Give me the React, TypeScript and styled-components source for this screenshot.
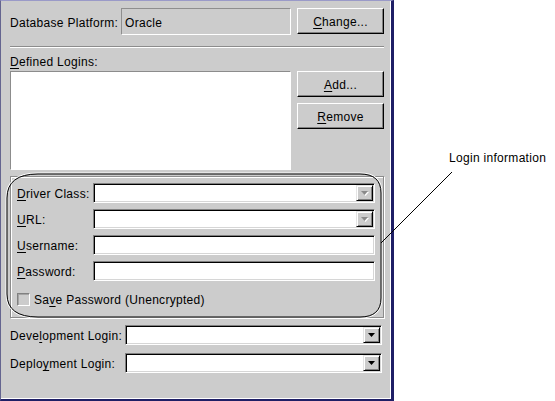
import React from 'react';
import styled, { createGlobalStyle, css } from 'styled-components';

const GlobalStyle = createGlobalStyle`
  html, body {
    margin: 0;
    padding: 0;
    background: #ffffff;
  }
  body {
    font-family: 'Liberation Sans', Arial, sans-serif;
    font-size: 12px;
    letter-spacing: 0.3px;
    color: #000000;
  }
`;

const Page = styled.div`
  position: relative;
  display: flex;
  width: 555px;
  height: 401px;
  overflow: hidden;
`;

const Frame = styled.div`
  box-sizing: border-box;
  width: 394px;
  height: 401px;
  padding: 7px 7px 0 9px;
  display: flex;
  flex-direction: column;
  background: #cccccc;
  border-left: 1px solid #64648f;
  border-top: 1px solid #9a9ac8;
  border-right: 3px solid #1f1f66;
  border-bottom: 2px solid #1f1f66;
  box-shadow: inset -1px -1px 0 #ffffff;
`;

const TopRow = styled.div`
  display: flex;
  align-items: flex-start;
  gap: 6px;
  height: 27px;
`;

const Label = styled.span<{ $w?: number }>`
  flex: none;
  width: ${(p) => (p.$w ? `${p.$w}px` : 'auto')};
  line-height: 14px;
  padding-top: 2px;
  white-space: nowrap;
`;

const TopLabel = styled(Label)`
  align-self: center;
  padding-top: 3px;
`;

const Mn = styled.span`
  text-decoration: underline;
  text-underline-offset: 2px;
`;

const ReadOnlyField = styled.div`
  box-sizing: border-box;
  width: 170px;
  height: 27px;
  padding: 3px 0 0 3px;
  display: flex;
  align-items: center;
  line-height: 14px;
  border: 1px solid;
  border-color: #8e8e8e #ffffff #ffffff #8e8e8e;
`;

const Button = styled.div`
  box-sizing: border-box;
  width: 87px;
  height: 26px;
  padding-top: 2px;
  display: flex;
  align-items: center;
  justify-content: center;
  line-height: 14px;
  background: #cccccc;
  border: 1px solid;
  border-color: #ffffff #000000 #000000 #ffffff;
  box-shadow: inset -1px -1px 0 #808080;
`;

const Separator = styled.div`
  margin-top: 11px;
  height: 0;
  border-top: 1px solid #8c8c8c;
  border-bottom: 1px solid #ffffff;
`;

const SectionLabel = styled.div`
  margin: 7px 0 2px;
  line-height: 14px;
`;

const LoginsRow = styled.div`
  display: flex;
  align-items: flex-start;
  gap: 6px;
`;

const ListBox = styled.div`
  box-sizing: border-box;
  width: 281px;
  height: 99px;
  background: #ffffff;
  border: 1px solid;
  border-color: #8c8c8c #ffffff #ffffff #8c8c8c;
`;

const ButtonStack = styled.div`
  display: flex;
  flex-direction: column;
  gap: 6px;
`;

const Group = styled.div`
  margin-top: 6px;
  padding: 6px 8px 11px 6px;
  border: 1px solid #8c8c8c;
  box-shadow: inset 1px 1px 0 #ffffff, 1px 1px 0 #ffffff;
`;

const FieldGrid = styled.div<{ $label: number; $gap: number }>`
  display: grid;
  grid-template-columns: ${(p) => p.$label}px 1fr;
  row-gap: ${(p) => p.$gap}px;
  align-items: center;
`;

const sunken = css`
  box-sizing: border-box;
  height: 20px;
  background: #ffffff;
  border: 1px solid;
  border-color: #808080 #ffffff #ffffff #808080;
  box-shadow: inset 1px 1px 0 #000000, inset -1px -1px 0 #d6d6d6;
`;

const TextField = styled.div`
  ${sunken}
`;

const Combo = styled.div`
  ${sunken}
  padding: 1px;
  display: flex;
  justify-content: flex-end;
`;

const ComboButton = styled.div`
  box-sizing: border-box;
  width: 17px;
  height: 16px;
  display: flex;
  align-items: center;
  justify-content: center;
  background: #cccccc;
  border: 1px solid;
  border-color: #e4e4e4 #000000 #000000 #e4e4e4;
  box-shadow: inset 1px 1px 0 #ffffff, inset -1px -1px 0 #808080;
`;

const CheckRow = styled.div`
  margin-top: 12px;
  display: flex;
  align-items: center;
  gap: 4px;
  height: 13px;
  line-height: 14px;
`;

const CheckBox = styled.div`
  box-sizing: border-box;
  width: 13px;
  height: 13px;
  background: #cccccc;
  border: 1px solid;
  border-color: #808080 #ffffff #ffffff #808080;
  box-shadow: inset 1px 1px 0 #a4a4a4;
`;

const LoginSection = styled.div`
  margin-top: 7px;
  padding-right: 2px;
`;

const Aside = styled.div`
  flex: 1;
  padding: 151px 0 0 55px;
  line-height: 14px;
  white-space: nowrap;
`;

const Overlay = styled.svg`
  position: absolute;
  left: 0;
  top: 0;
  pointer-events: none;
`;

const Arrow = ({ disabled }: { disabled?: boolean }) => (
  <svg width="8" height="5" viewBox="0 0 8 5">
    {disabled && <polygon points="1,1 8,1 4.5,5" fill="#ffffff" />}
    <polygon points="0,0 7,0 3.5,4" fill={disabled ? '#8a8a8a' : '#000000'} />
  </svg>
);

const ComboBox = ({ disabled }: { disabled?: boolean }) => (
  <Combo>
    <ComboButton>
      <Arrow disabled={disabled} />
    </ComboButton>
  </Combo>
);

const App = () => {
  return (
    <>
      <GlobalStyle />
      <Page>
        <Frame>
          <TopRow>
            <TopLabel $w={105}>Database Platform:</TopLabel>
            <ReadOnlyField>Oracle</ReadOnlyField>
            <Button>
              <span>
                <Mn>C</Mn>hange...
              </span>
            </Button>
          </TopRow>
          <Separator />
          <SectionLabel>
            <Mn>D</Mn>efined Logins:
          </SectionLabel>
          <LoginsRow>
            <ListBox />
            <ButtonStack>
              <Button>
                <span>
                  <Mn>A</Mn>dd...
                </span>
              </Button>
              <Button>
                <span>
                  <Mn>R</Mn>emove
                </span>
              </Button>
            </ButtonStack>
          </LoginsRow>
          <Group>
            <FieldGrid $label={76} $gap={6}>
              <Label>
                <Mn>D</Mn>river Class:
              </Label>
              <ComboBox disabled />
              <Label>
                <Mn>U</Mn>RL:
              </Label>
              <ComboBox disabled />
              <Label>
                <Mn>U</Mn>sername:
              </Label>
              <TextField />
              <Label>
                <Mn>P</Mn>assword:
              </Label>
              <TextField />
            </FieldGrid>
            <CheckRow>
              <CheckBox />
              <span>
                Sa<Mn>v</Mn>e Password (Unencrypted)
              </span>
            </CheckRow>
          </Group>
          <LoginSection>
            <FieldGrid $label={115} $gap={8}>
              <Label>
                Deve<Mn>l</Mn>opment Login:
              </Label>
              <ComboBox />
              <Label>
                Deplo<Mn>y</Mn>ment Login:
              </Label>
              <ComboBox />
            </FieldGrid>
          </LoginSection>
        </Frame>
        <Aside>Login information</Aside>
        <Overlay width="555" height="401" viewBox="0 0 555 401">
          <path
            d="M 38 173 H 360 Q 382 173 382 193 V 298 Q 382 318 360 318 H 38 Q 6 318 6 294 V 198 Q 6 173 38 173 Z"
            fill="none"
            stroke="#ffffff"
            strokeWidth="1"
          />
          <path
            d="M 38 174 H 360 Q 381 174 381 193 V 298 Q 381 317 360 317 H 38 Q 7 317 7 294 V 198 Q 7 174 38 174 Z"
            fill="none"
            stroke="#000000"
            strokeWidth="1"
          />
          <line x1="452" y1="172" x2="381" y2="243" stroke="#000000" strokeWidth="1" />
        </Overlay>
      </Page>
    </>
  );
};

export default App;
